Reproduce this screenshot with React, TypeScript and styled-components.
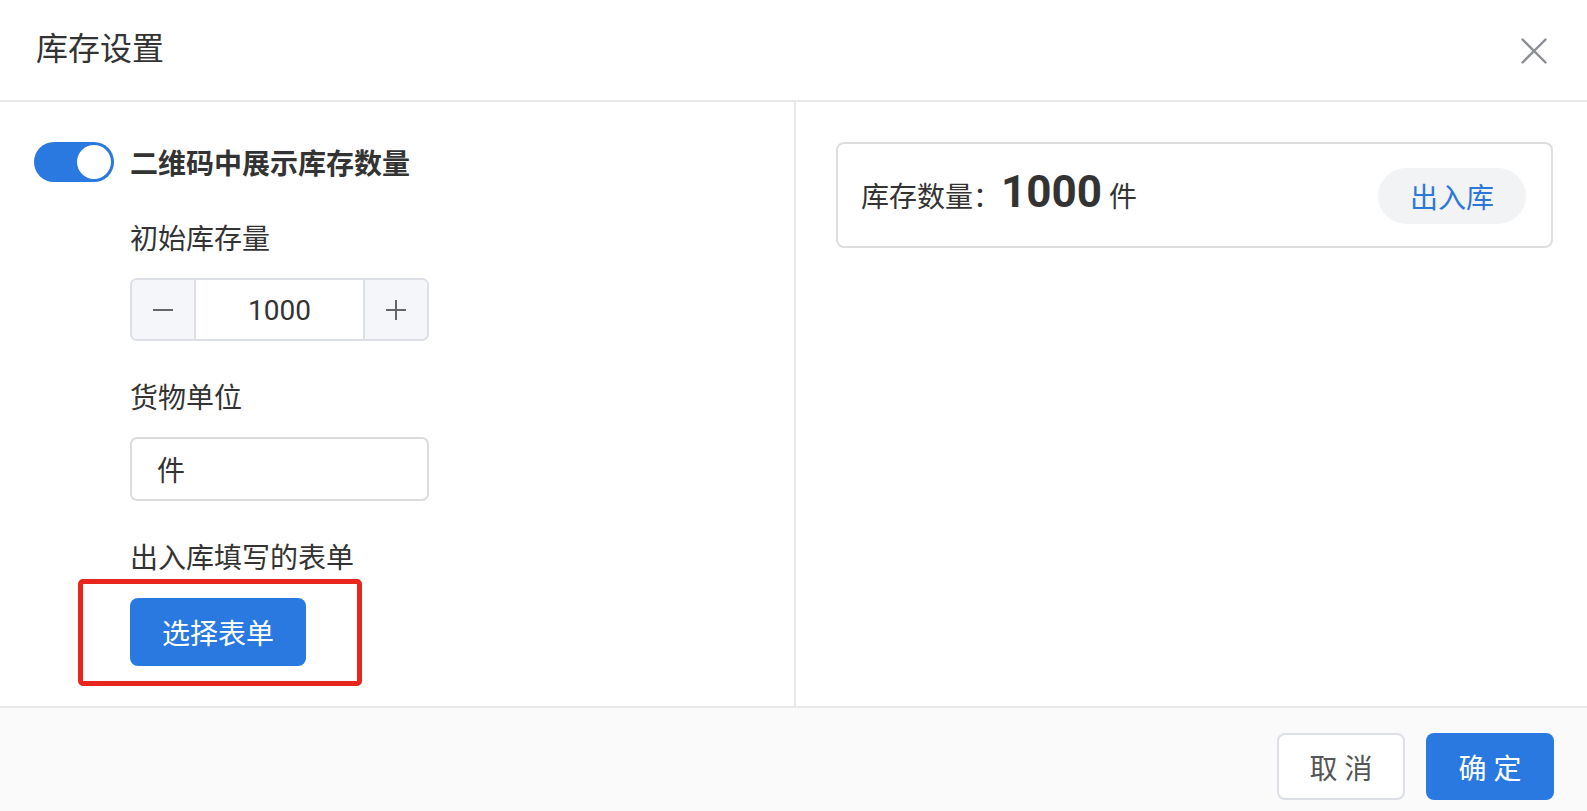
import React from "react";
import styled, { createGlobalStyle } from "styled-components";

const GlobalStyle = createGlobalStyle`
  *, *::before, *::after { box-sizing: border-box; }
  html, body { margin: 0; padding: 0; background: #ffffff; }
  body {
    font-family: "Roboto", "Noto Sans CJK SC", "Noto Sans", sans-serif;
    color: #333333;
  }
`;

const BLUE = "#2979e1";

const Dialog = styled.div`
  width: 1587px;
  height: 811px;
  display: flex;
  flex-direction: column;
  background: #ffffff;
  overflow: hidden;
`;

const Header = styled.header`
  height: 102px;
  flex: none;
  display: flex;
  align-items: center;
  justify-content: space-between;
  padding: 0 40px 2px 36px;
  border-bottom: 2px solid #e9e9e9;
`;

const Title = styled.h1`
  margin: 0;
  font-size: 32px;
  font-weight: 400;
  line-height: 44px;
  color: #333333;
`;

const CloseButton = styled.button`
  width: 26px;
  height: 26px;
  padding: 0;
  border: none;
  background: transparent;
  display: flex;
  cursor: pointer;
  margin-top: 4px;
`;

const Body = styled.div`
  flex: 1;
  display: flex;
  min-height: 0;
`;

const LeftPane = styled.section`
  width: 796px;
  flex: none;
  border-right: 2px solid #e9e9e9;
  padding: 40px 0 0 34px;
`;

const ToggleRow = styled.div`
  display: flex;
  align-items: center;
  gap: 16px;
  height: 40px;
`;

const Switch = styled.button<{ $on: boolean }>`
  width: 80px;
  height: 40px;
  border: none;
  border-radius: 20px;
  padding: 3px;
  display: flex;
  justify-content: ${(p) => (p.$on ? "flex-end" : "flex-start")};
  background: ${(p) => (p.$on ? BLUE : "#c9ccd2")};
  cursor: pointer;
`;

const Knob = styled.span`
  width: 34px;
  height: 34px;
  border-radius: 50%;
  background: #ffffff;
`;

const ToggleLabel = styled.span`
  font-size: 28px;
  font-weight: 700;
  line-height: 40px;
  padding-top: 6px;
  color: #333333;
`;

const Fields = styled.div`
  padding-left: 96px;
  display: flex;
  flex-direction: column;
  gap: 38px;
  margin-top: 38px;
`;

const Field = styled.div<{ $gap?: number }>`
  display: flex;
  flex-direction: column;
  align-items: flex-start;
  gap: ${(p) => p.$gap ?? 18}px;
`;

const FieldLabel = styled.label`
  font-size: 28px;
  line-height: 40px;
  color: #333333;
`;

const Stepper = styled.div`
  width: 299px;
  height: 63px;
  border: 2px solid #dcdfe6;
  border-radius: 7px;
  display: flex;
  overflow: hidden;
`;

const StepButton = styled.button<{ $side: "left" | "right" }>`
  width: 64px;
  flex: none;
  border: none;
  ${(p) => (p.$side === "left" ? "border-right" : "border-left")}: 2px solid #dcdfe6;
  background: #f5f6fa;
  display: flex;
  align-items: center;
  justify-content: center;
  padding: 0;
  cursor: pointer;
`;

const StepValue = styled.div`
  flex: 1;
  display: flex;
  align-items: center;
  justify-content: center;
  font-size: 28px;
  padding-top: 2px;
  color: #333333;
`;

const TextInput = styled.div`
  width: 299px;
  height: 64px;
  border: 2px solid #dcdcdc;
  border-radius: 7px;
  display: flex;
  align-items: center;
  padding-left: 25px;
  font-size: 28px;
  color: #333333;
`;

const Highlight = styled.div`
  position: relative;
  margin-top: 1px;
  &::after {
    content: "";
    position: absolute;
    top: -19px;
    right: -56px;
    bottom: -20px;
    left: -52px;
    border: 5px solid #e8261e;
    border-radius: 5px;
    pointer-events: none;
  }
`;

const PrimaryButton = styled.button<{ $w: number; $h: number }>`
  width: ${(p) => p.$w}px;
  height: ${(p) => p.$h}px;
  border: none;
  border-radius: 8px;
  background: ${BLUE};
  color: #ffffff;
  font-family: inherit;
  font-size: 28px;
  cursor: pointer;
  padding: 0;
`;

const DefaultButton = styled.button`
  width: 128px;
  height: 67px;
  border: 2px solid #dcdfe6;
  border-radius: 8px;
  background: #ffffff;
  color: #555555;
  font-family: inherit;
  font-size: 28px;
  cursor: pointer;
  padding: 0;
`;

const RightPane = styled.section`
  flex: 1;
  padding: 40px 34px 0 40px;
`;

const StockCard = styled.div`
  height: 106px;
  border: 2px solid #dedede;
  border-radius: 8px;
  display: flex;
  align-items: center;
  justify-content: space-between;
  padding: 0 25px 0 23px;
`;

const StockText = styled.div`
  display: flex;
  align-items: baseline;
  font-size: 28px;
  color: #333333;
  white-space: pre;
  padding-bottom: 6px;
`;

const BigNumber = styled.span`
  font-size: 44px;
  font-weight: 700;
  color: #333333;
`;

const PillButton = styled.button`
  width: 148px;
  height: 56px;
  border: none;
  border-radius: 28px;
  background: #f2f3f5;
  color: #2d78d6;
  font-family: inherit;
  font-size: 28px;
  cursor: pointer;
  padding: 0;
  margin-top: 2px;
`;

const Footer = styled.footer`
  height: 105px;
  flex: none;
  border-top: 2px solid #e9e9e9;
  background: #fafafa;
  display: flex;
  justify-content: flex-end;
  align-items: flex-start;
  gap: 21px;
  padding: 25px 33px 0 0;
`;

const CloseIcon = () => (
  <svg width="26" height="26" viewBox="0 0 26 26" fill="none">
    <path d="M1.5 1.5 L24.5 24.5 M24.5 1.5 L1.5 24.5" stroke="#8a8d93" strokeWidth="2.4" strokeLinecap="round" />
  </svg>
);

const MinusIcon = () => (
  <svg width="20" height="20" viewBox="0 0 20 20">
    <path d="M0 10 H20" stroke="#666" strokeWidth="2" />
  </svg>
);

const PlusIcon = () => (
  <svg width="20" height="20" viewBox="0 0 20 20">
    <path d="M0 10 H20 M10 0 V20" stroke="#666" strokeWidth="2" />
  </svg>
);

export default function App() {
  return (
    <>
      <GlobalStyle />
      <Dialog>
        <Header>
          <Title>库存设置</Title>
          <CloseButton aria-label="关闭">
            <CloseIcon />
          </CloseButton>
        </Header>
        <Body>
          <LeftPane>
            <ToggleRow>
              <Switch $on={true} aria-label="二维码中展示库存数量">
                <Knob />
              </Switch>
              <ToggleLabel>二维码中展示库存数量</ToggleLabel>
            </ToggleRow>
            <Fields>
              <Field>
                <FieldLabel>初始库存量</FieldLabel>
                <Stepper>
                  <StepButton $side="left">
                    <MinusIcon />
                  </StepButton>
                  <StepValue>1000</StepValue>
                  <StepButton $side="right">
                    <PlusIcon />
                  </StepButton>
                </Stepper>
              </Field>
              <Field>
                <FieldLabel>货物单位</FieldLabel>
                <TextInput>件</TextInput>
              </Field>
              <Field>
                <FieldLabel>出入库填写的表单</FieldLabel>
                <Highlight>
                  <PrimaryButton $w={176} $h={68}>选择表单</PrimaryButton>
                </Highlight>
              </Field>
            </Fields>
          </LeftPane>
          <RightPane>
            <StockCard>
              <StockText>
                库存数量：<BigNumber>1000</BigNumber> 件
              </StockText>
              <PillButton>出入库</PillButton>
            </StockCard>
          </RightPane>
        </Body>
        <Footer>
          <DefaultButton>取 消</DefaultButton>
          <PrimaryButton $w={128} $h={67}>确 定</PrimaryButton>
        </Footer>
      </Dialog>
    </>
  );
}
